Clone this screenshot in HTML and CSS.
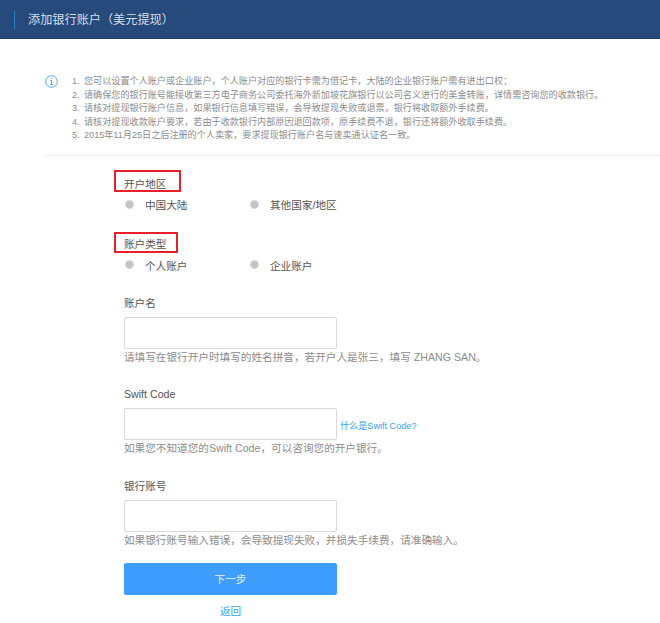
FILE: index.html
```html
<!DOCTYPE html>
<html lang="zh-CN">
<head>
    <meta charset="UTF-8">
    <title>添加银行账户(美元提现)</title>
    <link rel="stylesheet" href="styles.css">
</head>
<body>
<div class="top-bar">
    <h1 class="page-title">添加银行账户（美元提现）</h1>
</div>

<div class="notice">
    <svg class="info-icon" width="13" height="13" viewBox="0 0 13 13">
        <circle cx="6.5" cy="6.5" r="5.8" fill="none" stroke="#55a9ee" stroke-width="1"/>
        <rect x="5.9" y="3" width="1.2" height="1.3" fill="#55a9ee"/>
        <path d="M5.1 5.5H6.5V9.3M5.1 9.5H8" fill="none" stroke="#55a9ee" stroke-width="1"/>
    </svg>
    <ol class="notice-list">
        <li>您可以设置个人账户或企业账户，个人账户对应的银行卡需为借记卡，大陆的企业银行账户需有进出口权；</li>
        <li>请确保您的银行账号能接收第三方电子商务公司委托海外新加坡花旗银行以公司名义进行的美金转账，详情需咨询您的收款银行。</li>
        <li>请核对提现银行账户信息，如果银行信息填写错误，会导致提现失败或退票，银行将收取额外手续费。</li>
        <li>请核对提现收款账户要求，若由于收款银行内部原因退回款项，原手续费不退，银行还将额外收取手续费。</li>
        <li>2015年11月25日之后注册的个人卖家，要求提现银行账户名与速卖通认证名一致。</li>
    </ol>
</div>

<form class="account-form">
    <div class="group-label">开户地区<span class="mark mark-region"></span></div>
    <div class="radio-row">
        <label class="radio-item"><span class="radio"></span>中国大陆</label>
        <label class="radio-item"><span class="radio"></span>其他国家/地区</label>
    </div>

    <div class="group-label group-type">账户类型<span class="mark mark-type"></span></div>
    <div class="radio-row">
        <label class="radio-item"><span class="radio"></span>个人账户</label>
        <label class="radio-item"><span class="radio"></span>企业账户</label>
    </div>

    <div class="field field-name">
        <label class="field-label">账户名</label>
        <input class="text-input" type="text">
        <p class="help">请填写在银行开户时填写的姓名拼音，若开户人是张三，填写 ZHANG SAN。</p>
    </div>

    <div class="field field-swift">
        <label class="field-label">Swift Code</label>
        <div class="input-row">
            <input class="text-input" type="text">
            <a class="swift-link" href="#">什么是Swift Code?</a>
        </div>
        <p class="help">如果您不知道您的Swift Code，可以咨询您的开户银行。</p>
    </div>

    <div class="field field-last">
        <label class="field-label">银行账号</label>
        <input class="text-input" type="text">
        <p class="help">如果银行账号输入错误，会导致提现失败，并损失手续费，请准确输入。</p>
    </div>

    <button class="next-btn" type="button">下一步</button>
    <a class="back-link" href="#">返回</a>
</form>
</body>
</html>
```
FILE: styles.css
```css
html, body {
    margin: 0;
    padding: 0;
}

body {
    background-color: #fff;
    color: #555;
    font-family: "Liberation Sans", "Noto Sans CJK SC", sans-serif;
    font-size: 10.64px;
    overflow: hidden;
}

.top-bar {
    height: 39px;
    padding: 11px 0 0 14px;
    box-sizing: border-box;
    background-color: #264a7c;
    border-bottom: 1px solid #1f3f6e;
}

.page-title {
    margin: 0;
    padding-left: 13px;
    height: 18px;
    line-height: 18px;
    border-left: 1px solid #2f7fc4;
    color: #d5dde8;
    font-size: 12.16px;
    font-weight: normal;
}

.notice {
    display: flex;
    margin: 36px 0 0 45px;
    padding-bottom: 12px;
    border-bottom: 1px solid #eee;
}

.info-icon {
    flex: none;
}

.notice-list {
    margin: 0 0 0 14px;
    padding: 0;
    list-style: none;
    counter-reset: item;
    color: #8c8c8c;
    font-size: 9.12px;
    line-height: 13.6px;
}

.notice-list li {
    counter-increment: item;
}

.notice-list li::before {
    content: counter(item) ". ";
    display: inline-block;
    width: 12px;
}

.account-form {
    padding: 20px 0 0 124px;
    width: 213px;
}

.group-label {
    position: relative;
    line-height: 16px;
}

.group-type {
    margin-top: 23px;
}

/* red boxes drawn over the screenshot */
.mark {
    position: absolute;
    left: -10px;
    border: 2px solid #e8202a;
    box-sizing: border-box;
}

.mark-region {
    top: -6px;
    width: 67px;
    height: 22px;
}

.mark-type {
    top: -4px;
    width: 64px;
    height: 21px;
}

.radio-row {
    display: flex;
    margin-top: 5.5px;
    line-height: 16px;
    white-space: nowrap;
}

.radio-item {
    display: flex;
    flex: none;
    align-items: center;
    width: 125px;
}

.radio {
    width: 9px;
    height: 9px;
    margin: -2px 11px 0 1px;
    border-radius: 50%;
    background: radial-gradient(circle, #c2c2c2 0, #c8c8c8 55%, #e2e2e2 70%, #c4c4c4 100%);
}

.field-name {
    margin-top: 21px;
}

.field {
    margin-bottom: 21px;
}

.field-swift {
    margin-bottom: 22px;
}

.field-last {
    margin-bottom: 15px;
}

.field-label {
    display: block;
    line-height: 16px;
    margin-bottom: 6px;
}

.text-input {
    display: block;
    flex: none;
    width: 213px;
    height: 32px;
    padding: 0;
    box-sizing: border-box;
    border: 1px solid #d9d9d9;
    border-radius: 2px;
    background-color: #fff;
}

.input-row {
    display: flex;
    align-items: center;
    white-space: nowrap;
}

.swift-link {
    margin: 2px 0 0 3px;
    color: #35a4f0;
    font-size: 9.12px;
    text-decoration: none;
}

.help {
    margin: 0;
    line-height: 16px;
    color: #8c8c8c;
    white-space: nowrap;
}

.next-btn {
    display: block;
    width: 213px;
    height: 32px;
    padding: 0;
    border: none;
    border-radius: 2px;
    background-color: #3e9eff;
    color: #e8f3ff;
    font-family: inherit;
    font-size: 10.64px;
}

.back-link {
    display: block;
    margin-top: 8px;
    text-align: center;
    color: #35a4f0;
    line-height: 16px;
    text-decoration: none;
}
```
